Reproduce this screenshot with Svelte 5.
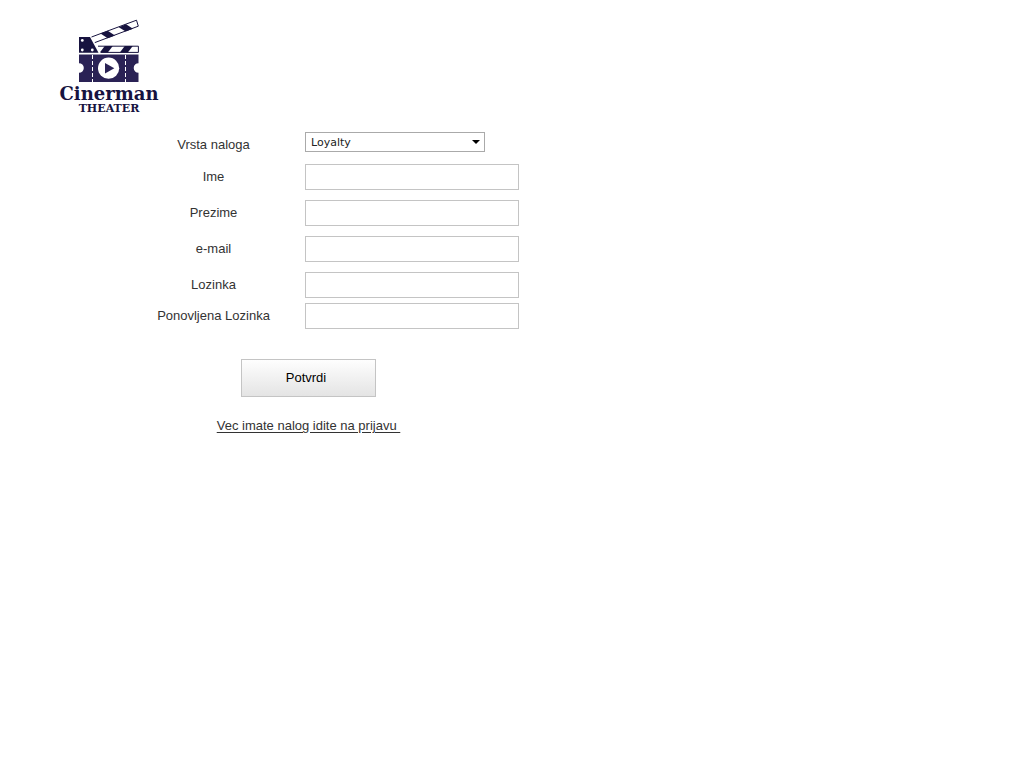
<script>
  const accountTypes = ['Loyalty', 'Standard'];
  let account = $state('Loyalty');
  const fields = [
    { id: 'ime', label: 'Ime', type: 'text' },
    { id: 'prezime', label: 'Prezime', type: 'text' },
    { id: 'email', label: 'e-mail', type: 'email' }
  ];
  const passwords = [
    { id: 'lozinka', label: 'Lozinka' },
    { id: 'ponovljena', label: 'Ponovljena Lozinka' }
  ];
</script>

<header>
  <div class="logo">
    <svg viewBox="78 18 62 65" width="62" height="65" aria-hidden="true">
      <g fill="#17133f">
        <path d="M79 37H90L98.5 52.8H79Z" />
        <path d="M100.5 33.5L107.7 30.7L115 35.4L107.7 38.3Z" />
        <path d="M118.8 27.2L126 24.3L133 28.8L125.7 31.6Z" />
        <path d="M104.8 46H112.8L107.8 52.5H99.8Z" />
        <path d="M124.8 46H132.8L127.8 52.5H119.8Z" />
      </g>
      <g fill="none" stroke="#17133f">
        <path d="M91.5 37L136.5 20.2L138.3 26.2L94.8 42.6" />
        <path d="M98 46.2H138.4V52.4H101" />
      </g>
      <path fill="#2a2255" d="M79 54.5H138.5V63.2A4.8 4.8 0 0 0 138.5 72.8V82H79V72.8A4.8 4.8 0 0 0 79 63.2Z" />
      <path stroke="#fff" stroke-dasharray="4 2" d="M92.5 55V82M125.5 55V82" />
      <g fill="#fff">
        <circle cx="82.3" cy="40.4" r="1.4" />
        <circle cx="82.3" cy="50" r="1.4" />
        <circle cx="92.3" cy="50" r="1.4" />
        <circle cx="108.6" cy="68.2" r="10.6" />
      </g>
      <path fill="#2a2255" d="M105 63L114.3 68.2L105 73.4Z" />
    </svg>
    <span class="name">Cinerman</span>
    <span class="sub">THEATER</span>
  </div>
</header>

<main>
  <form onsubmit={(e) => e.preventDefault()}>
    <div class="row account">
      <label for="vrsta">Vrsta naloga</label>
      <div class="picker">
        <select id="vrsta" bind:value={account}>
          {#each accountTypes as type}
            <option>{type}</option>
          {/each}
        </select>
        <svg viewBox="0 0 8 4" width="8" height="4" aria-hidden="true"><path d="M0 0H8L4 4Z" /></svg>
      </div>
    </div>
    {#each fields as field}
      <div class="row">
        <label for={field.id}>{field.label}</label>
        <input id={field.id} type={field.type} />
      </div>
    {/each}
    <div class="passwords">
      {#each passwords as field}
        <div class="row">
          <label for={field.id}>{field.label}</label>
          <input id={field.id} type="password" />
        </div>
      {/each}
    </div>
    <div class="actions">
      <button type="submit">Potvrdi</button>
      <a href="#prijava">Vec imate nalog idite na prijavu&nbsp;</a>
    </div>
  </form>
</main>

<style>
  :global(body) {
    background: #fff;
    color: #333;
    font: 13px/16px 'Liberation Sans', Arial, sans-serif;
  }

  header {
    display: flex;
    padding: 18px 59px 0;
  }

  .logo {
    display: flex;
    flex-direction: column;
    align-items: center;
    width: 100px;
    color: #17133f;
    font-family: 'DejaVu Serif', serif;
    font-weight: bold;
  }

  .name {
    font-size: 18px;
    line-height: 22px;
  }

  .sub {
    font-size: 11px;
    line-height: 8px;
  }

  main {
    padding: 19px 24px 24px 152px;
  }

  form,
  .passwords {
    display: flex;
    flex-direction: column;
    gap: 10px;
  }

  .passwords {
    gap: 5px;
  }

  .row {
    display: grid;
    grid-template-columns: 123px minmax(0, 214px);
    column-gap: 30px;
    align-items: center;
  }

  .account {
    align-items: start;
  }

  label {
    text-align: center;
  }

  .account label {
    padding: 5px 0 1px;
  }

  .picker {
    display: grid;
    align-items: center;
    max-width: 180px;
  }

  .picker > * {
    grid-area: 1 / 1;
  }

  .picker svg {
    justify-self: end;
    margin-right: 5px;
    pointer-events: none;
  }

  select {
    appearance: none;
    width: 100%;
    height: 20px;
    padding: 0 20px 0 5px;
    border: 1px solid #aaa;
    border-radius: 0;
    background: #fff;
    color: #222;
    font: 11px 'DejaVu Sans', Verdana, sans-serif;
  }

  input {
    box-sizing: border-box;
    width: 100%;
    height: 26px;
    padding: 0 6px;
    border: 1px solid #c4c4c4;
    background: #fff;
    font: inherit;
  }

  .actions {
    display: flex;
    flex-direction: column;
    align-items: center;
    gap: 21px;
    max-width: 313px;
    padding-top: 20px;
  }

  button {
    width: 135px;
    height: 38px;
    padding: 0 5px 0 0;
    border: 1px solid #c4c4c4;
    background: linear-gradient(#fefefe, #e4e4e4);
    color: #000;
    font: inherit;
  }

  a {
    color: #333;
    text-underline-offset: 2px;
  }
</style>
